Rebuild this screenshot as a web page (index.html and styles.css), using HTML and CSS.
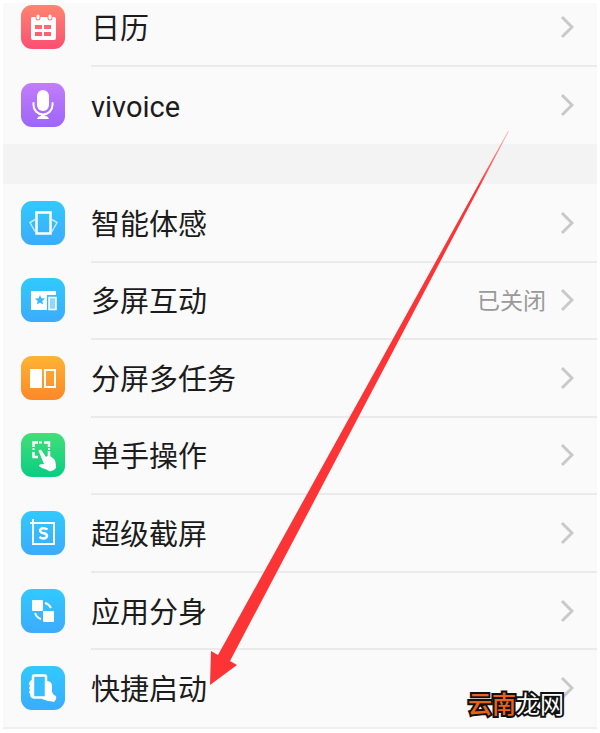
FILE: index.html
```html
<!DOCTYPE html>
<html lang="zh-CN">
<head>
    <meta charset="UTF-8">
    <meta name="viewport" content="width=device-width, initial-scale=1.0">
    <title>设置</title>
    <link rel="stylesheet" href="styles.css">
</head>
<body>
    <main class="panel">
        <ul class="group group-top">
            <li class="row">
                <a href="#" class="item">
                    <svg class="icon icon-red" viewBox="0 0 44 44" aria-hidden="true">
                        <path fill="#fff" fill-rule="evenodd" d="M11 12h22q2 0 2 2v19q0 2-2 2H12q-2 0-2-2V14q0-2 1-2zM14 20v4h7v-4zM23 20v4h7v-4zM14 27v4h7v-4zM23 27v4h7v-4z"/>
                        <path fill="none" stroke="#fb7b72" stroke-width="5" stroke-linecap="round" d="M17 10v3M29 10v3"/>
                        <path fill="none" stroke="#fff" stroke-width="3" stroke-linecap="round" d="M17 11v2M29 11v2"/>
                    </svg>
                    <span class="label">日历</span>
                    <svg class="chevron" viewBox="0 0 14 24" aria-hidden="true"><path d="M2 2l10 10L2 22"/></svg>
                </a>
            </li>
            <li class="row">
                <a href="#" class="item">
                    <svg class="icon icon-purple" viewBox="0 0 44 44" aria-hidden="true">
                        <rect x="16" y="7" width="12" height="21" rx="6" fill="#fff"/>
                        <path fill="none" stroke="#fff" stroke-width="2" stroke-linecap="round" d="M12.500 20v2a9.500 9.500 0 0 0 19 0v-2"/>
                        <path fill="#fff" d="M20 31h4v2q3 0 4 3H16q1-3 4-3z"/>
                    </svg>
                    <span class="label">vivoice</span>
                    <svg class="chevron" viewBox="0 0 14 24" aria-hidden="true"><path d="M2 2l10 10L2 22"/></svg>
                </a>
            </li>
        </ul>

        <ul class="group group-main">
            <li class="row">
                <a href="#" class="item">
                    <svg class="icon icon-blue" viewBox="0 0 44 44" aria-hidden="true">
                        <rect x="15.500" y="11.500" width="14" height="21" fill="none" stroke="#fff" stroke-width="2.500"/>
                        <path fill="none" stroke="#fff" stroke-opacity=".7" stroke-width="1.500" d="M14 18.500l-5 3 5 9M31 18.500l5 3-5 9"/>
                    </svg>
                    <span class="label">智能体感</span>
                    <svg class="chevron" viewBox="0 0 14 24" aria-hidden="true"><path d="M2 2l10 10L2 22"/></svg>
                </a>
            </li>
            <li class="row">
                <a href="#" class="item">
                    <svg class="icon icon-blue" viewBox="0 0 44 44" aria-hidden="true">
                        <path fill="#fff" fill-rule="evenodd" d="M10 13h25v4h-9v15H10zM19 17l-1.400 3.300-3.600.3 2.700 2.400-.8 3.600 3.100-1.900 3.100 1.900-.8-3.600 2.700-2.400-3.600-.3z"/>
                        <rect x="28" y="19.500" width="7" height="12" fill="#fff" fill-opacity=".45" stroke="#fff" stroke-width="1.500"/>
                    </svg>
                    <span class="label">多屏互动</span>
                    <span class="status">已关闭</span>
                    <svg class="chevron" viewBox="0 0 14 24" aria-hidden="true"><path d="M2 2l10 10L2 22"/></svg>
                </a>
            </li>
            <li class="row">
                <a href="#" class="item">
                    <svg class="icon icon-orange" viewBox="0 0 44 44" aria-hidden="true">
                        <rect x="9" y="13" width="12" height="19" fill="#fff"/>
                        <rect x="24" y="14" width="10" height="17" fill="none" stroke="#fff" stroke-width="2"/>
                    </svg>
                    <span class="label">分屏多任务</span>
                    <svg class="chevron" viewBox="0 0 14 24" aria-hidden="true"><path d="M2 2l10 10L2 22"/></svg>
                </a>
            </li>
            <li class="row">
                <a href="#" class="item">
                    <svg class="icon icon-green" viewBox="0 0 44 44" aria-hidden="true">
                        <path fill="none" stroke="#fff" stroke-width="2.500" d="M12.500 14V9.500H17M23 9.500h5V14M28 18v5M12.500 19v5H17"/>
                        <path fill="none" stroke="#fff" stroke-width="2" d="M18 9.500h3M12.500 15v2M28 15v2"/>
                        <path fill="#fff" d="M18 17q2-1 3 1l4 6q2-2 4-1l4 3q2 2 2 9-3 4-7 3-3-2-7-3-3-1-3-3 1-1 5-1l-5-12q-1-1 0-2z"/>
                    </svg>
                    <span class="label">单手操作</span>
                    <svg class="chevron" viewBox="0 0 14 24" aria-hidden="true"><path d="M2 2l10 10L2 22"/></svg>
                </a>
            </li>
            <li class="row">
                <a href="#" class="item">
                    <svg class="icon icon-blue" viewBox="0 0 44 44" aria-hidden="true">
                        <path fill="none" stroke="#fff" stroke-width="2" d="M9 12h24v21H12V8"/>
                        <path fill="none" stroke="#fff" stroke-width="2.500" d="M26.500 18.500q-3-2-6-1-2.500 1.500-.5 3.800 1 .7 3 1 3 .7 3 2.800-.5 2.400-3.500 2.400-2 0-4-1.500"/>
                    </svg>
                    <span class="label">超级截屏</span>
                    <svg class="chevron" viewBox="0 0 14 24" aria-hidden="true"><path d="M2 2l10 10L2 22"/></svg>
                </a>
            </li>
            <li class="row">
                <a href="#" class="item">
                    <svg class="icon icon-blue" viewBox="0 0 44 44" aria-hidden="true">
                        <rect x="11" y="11" width="11" height="11" rx="1" fill="#fff"/>
                        <rect x="22" y="22" width="11" height="11" rx="1" fill="#fff"/>
                        <path fill="none" stroke="#fff" stroke-width="2" d="M24 14q4 1 6 5M14 24q2 5 6 6"/>
                    </svg>
                    <span class="label">应用分身</span>
                    <svg class="chevron" viewBox="0 0 14 24" aria-hidden="true"><path d="M2 2l10 10L2 22"/></svg>
                </a>
            </li>
            <li class="row">
                <a href="#" class="item">
                    <svg class="icon icon-blue" viewBox="0 0 44 44" aria-hidden="true">
                        <path fill="#fff" d="M11 14v18q-2-1-2-4l-1-2 1-2-1-2 1-2-1-2 1-3zM25 15q6 0 6 5v6q1 3 4 4 1 3-2 6-3-1-6-1l-6-2v-3h4z"/>
                        <rect x="12" y="9.500" width="13" height="22" rx="1" fill="#36bffb" stroke="#fff" stroke-width="2.500"/>
                    </svg>
                    <span class="label">快捷启动</span>
                    <svg class="chevron" viewBox="0 0 14 24" aria-hidden="true"><path d="M2 2l10 10L2 22"/></svg>
                </a>
            </li>
        </ul>

        <!-- 指向“快捷启动”的红色箭头 -->
        <svg class="arrow" viewBox="0 0 300 556" aria-hidden="true">
            <defs>
                <linearGradient id="tail" x1="1" y1="0" x2="0" y2="1">
                    <stop offset="0" stop-color="#fd3435" stop-opacity=".3"/>
                    <stop offset=".1" stop-color="#fd3435"/>
                </linearGradient>
            </defs>
            <path fill="url(#tail)" d="M298 0L8 524l-7-4-1 34 27-20-7-4L299 0z"/>
        </svg>
        <div class="watermark"><span>云南</span>龙网</div>
    </main>
</body>
</html>
```

FILE: styles.css
```css
* { margin: 0; padding: 0; box-sizing: border-box; }
:root { --panel: #fafafa; --line: #eaeaea; --gap: #f3f3f3; --text: #1c1c1c; --muted: #999; }
body { background-color: #fff; color: var(--text); font-family: Roboto, "Noto Sans CJK SC", sans-serif; }

.panel { position: relative; display: flex; flex-direction: column; min-height: calc(100vh - 7px); margin: 3px 3px 4px; background-color: var(--panel); border-bottom: 2px solid #f0f0f0; }
.group { list-style: none; }
.group-top { overflow: hidden; border-bottom: 40px solid var(--gap); }
.group-top .row { height: 78px; }
.group-top .row:first-child { margin-top: -15px; }
.group-main { flex: 1; display: grid; grid-auto-rows: 1fr; }

.row { position: relative; }
.item { display: flex; align-items: center; height: 100%; padding: 0 23px 0 18px; color: inherit; text-decoration: none; }
.row + .row::before { content: ""; position: absolute; top: -1px; left: 88px; right: 0; height: 2px; background-color: var(--line); }
.icon { flex: none; width: 44px; height: 44px; margin-right: 26px; border-radius: 11px; }
.icon-red { background: linear-gradient(#fd8570, #fc4f72); }
.icon-purple { background: linear-gradient(#c27df9, #9d65fb); }
.icon-blue { background: linear-gradient(#30caff, #3cabfb); }
.icon-orange { background: linear-gradient(#feb335, #fc8828); }
.icon-green { background: linear-gradient(#42df78, #08cd83); }
.label { flex: 1; padding-top: 4px; font-size: 29px; line-height: 40px; }
.status { margin-right: 14px; padding-top: 4px; font-size: 23px; line-height: 32px; color: var(--muted); }
.chevron { flex: none; width: 14px; height: 24px; fill: none; stroke: #c9c9c9; stroke-width: 3; }

.arrow { position: absolute; top: 128px; left: 207px; width: 300px; height: 556px; pointer-events: none; }
.watermark { position: absolute; right: 33px; bottom: 6px; color: #fff; font-size: 24px; line-height: 32px; -webkit-text-stroke: 4px #111; paint-order: stroke fill; }
.watermark span { color: #e9621c; font-weight: 500; }
```
